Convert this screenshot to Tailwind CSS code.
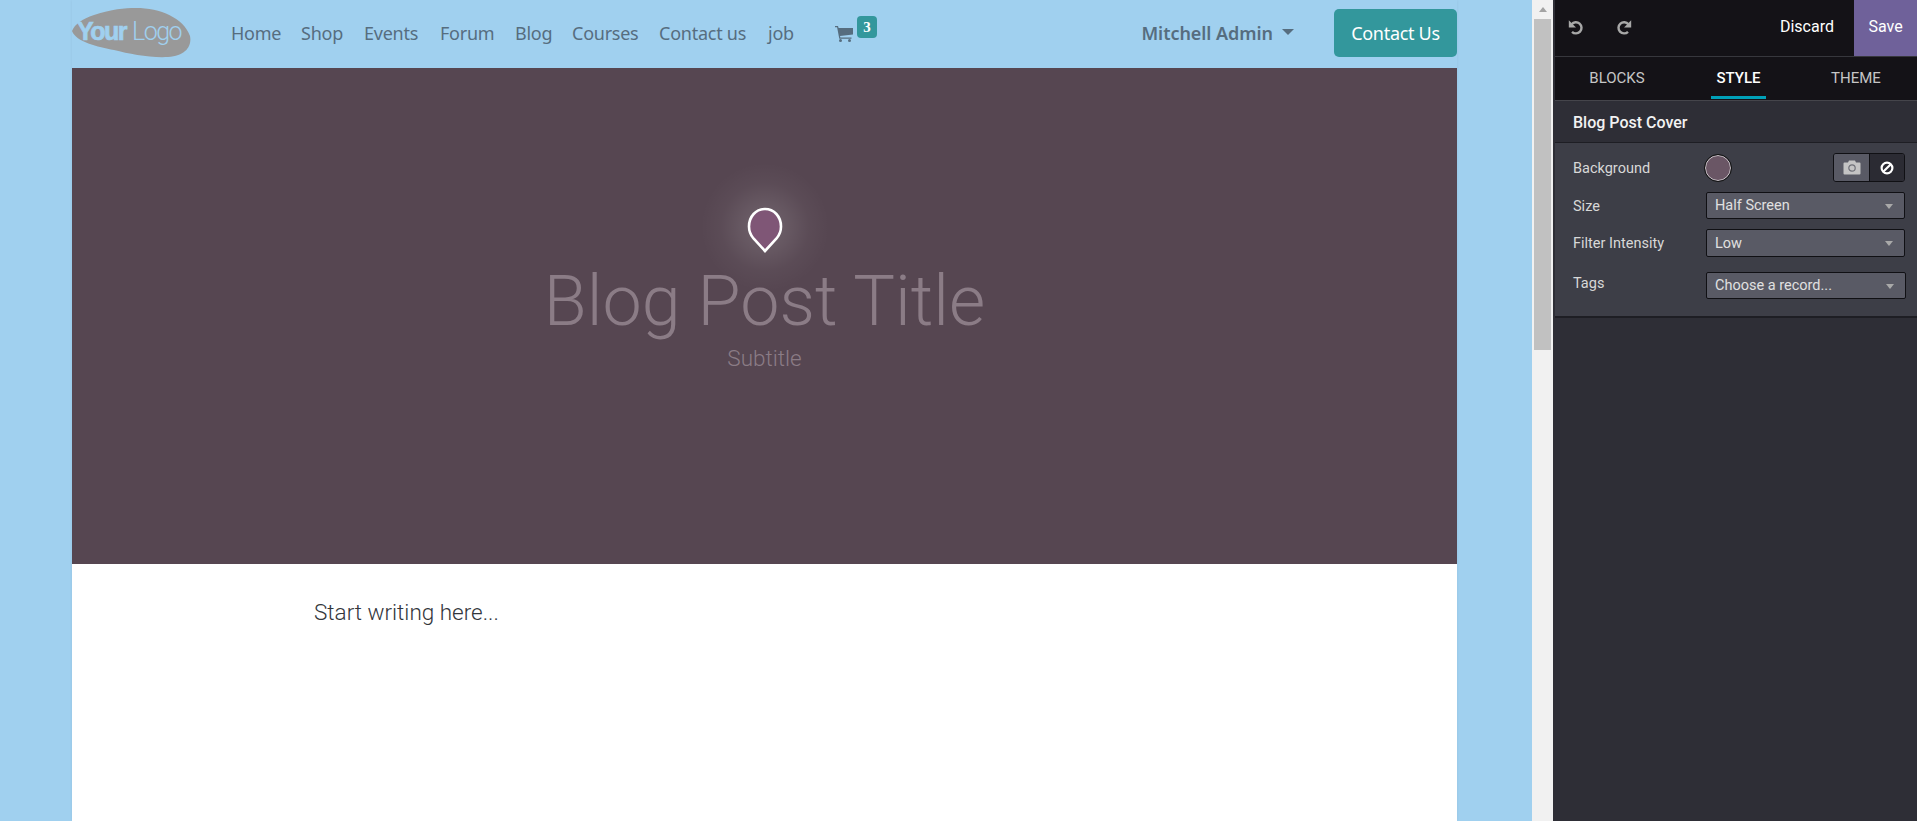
<!DOCTYPE html>
<html><head><meta charset="utf-8"><script src="https://cdn.jsdelivr.net/npm/@tailwindcss/browser@4"></script></head>
<body class="m-0 h-[821px] w-[1917px] overflow-hidden bg-[#a0d0ef]">
<div class="flex h-[821px] w-[1917px]">
  <!-- page -->
  <div class="w-[1532px] h-full pl-[72px] flex flex-col">
    <div class="w-[1385px] h-full flex flex-col shadow-[0_0_3px_rgba(0,0,0,0.06)]">
      <header class="h-[68px] shrink-0 flex items-center bg-[#a0d0ef] font-['Noto_Sans',sans-serif] text-[#566d7f]">
        <svg class="w-[119px] h-[58px] mt-[-10px] shrink-0" viewBox="0 0 119 58">
          <path d="M0 31 C3 24 10 19 22 15 C40 9 52 8 64 8 C88 8 112 18 118 36 C120 46 114 56 96 57 C78 58 58 54 42 50 C26 47 4 42 0 31Z" fill="#999999"/>
          <text x="5" y="40" font-family="Liberation Sans, sans-serif" font-weight="700" font-size="25" letter-spacing="-1.5" fill="#a0d0ef" stroke="#a0d0ef" stroke-width="0.700">Your</text>
          <text x="60" y="40" font-family="Roboto, sans-serif" font-weight="300" font-size="25" letter-spacing="-1.5" fill="#a0d0ef">Logo</text>
        </svg>
        <nav class="ml-[40px] mt-[-2px] flex items-center text-[18px] tracking-[-0.25px] leading-[24px] shrink-0">
          <a class="w-[70px] block">Home</a>
          <a class="w-[63px] block">Shop</a>
          <a class="w-[76px] block">Events</a>
          <a class="w-[75px] block">Forum</a>
          <a class="w-[57px] block">Blog</a>
          <a class="w-[87px] block">Courses</a>
          <a class="w-[109px] block">Contact us</a>
          <a class="w-[67px] block">job</a>
        </nav>
        <div class="self-start mt-[16px] flex items-start shrink-0">
          <svg class="w-[18px] h-[16px] mt-[10px]" viewBox="0 0 18 16" fill="#566d7f"><path d="M0 0h3l.6 2H18v6.500L5 10l.4 1.500H16.500v1.200H4.300L2.100 1.200H0z"/><circle cx="5.500" cy="14.500" r="1.500"/><circle cx="14.500" cy="14.500" r="1.500"/></svg>
          <span class="ml-[4px] w-[20px] h-[22px] rounded-[4px] bg-[#33979c] text-white text-[15px] font-bold font-['Liberation_Serif',serif] flex items-center justify-center">3</span>
        </div>
        <span class="ml-auto mt-[-2px] leading-[24px] text-[18px] font-semibold tracking-[-0.05px]">Mitchell Admin</span>
        <span class="ml-[9px] mt-[-4px] w-0 h-0 border-x-[6px] border-x-transparent border-t-[6px] border-t-[#566d7f]"></span>
        <a class="ml-[40px] mt-[-2px] w-[123px] h-[48px] rounded-[5px] bg-[#33979c] text-white text-[18px] tracking-[-0.3px] flex items-center justify-center">Contact Us</a>
      </header>
      <section class="h-[496px] shrink-0 bg-[#564651] flex flex-col items-center">
        <div class="relative mt-[138px] w-[36px] h-[48px] shrink-0">
          <div class="absolute left-[-47px] top-[-44px] w-[130px] h-[130px] rounded-full bg-[radial-gradient(circle,rgba(255,255,255,0.16)_0%,rgba(255,255,255,0.09)_28%,rgba(255,255,255,0.03)_48%,rgba(255,255,255,0)_70%)]"></div>
          <svg class="absolute left-0 top-0 w-[36px] h-[48px]" viewBox="0 0 36 48">
            <path d="M18 45 L6.500 32.500 C3.500 29 2 25 2 20.500 C2 10.500 9 3 18 3 C27 3 34 10.500 34 20.500 C34 25 32.500 29 29.500 32.500Z" fill="#7f5676" stroke="#fff" stroke-width="2.600"/>
          </svg>
        </div>
        <h1 class="mt-[4px] text-[70px] leading-[86px] font-light text-[#8b7c86] font-['Roboto',sans-serif] whitespace-nowrap">Blog Post Title</h1>
        <p class="mt-[-1px] text-[22.500px] leading-[30px] font-light text-[#8b7c86] font-['Roboto',sans-serif]">Subtitle</p>
      </section>
      <main class="flex-1 bg-white pl-[242px] pt-[32px]">
        <p class="text-[22.500px] leading-[32px] font-light text-[#33363b] font-['Roboto',sans-serif]">Start writing here...</p>
      </main>
    </div>
  </div>
  <!-- scrollbar -->
  <div class="w-[21px] h-full shrink-0 bg-[#f1f1f1] flex flex-col items-center">
    <span class="mt-[7px] w-0 h-0 border-x-[4.500px] border-x-transparent border-b-[5px] border-b-[#a3a3a3]"></span>
    <span class="mt-[7px] w-[17px] h-[331px] bg-[#c1c1c1]"></span>
  </div>
  <!-- panel -->
  <aside class="w-[364px] h-full shrink-0 bg-[#2e2e36] border-l-[2px] border-l-[#2e2e36] font-['Roboto',sans-serif] text-[#d9d9d9] flex flex-col">
    <div class="h-[57px] shrink-0 bg-[#141217] border-b border-b-[#37373d] flex items-center">
      <svg class="ml-[13px] mt-[-2px] w-[16px] h-[16px]" viewBox="0 0 20 20" fill="none" stroke="#a8a8a8" stroke-width="3"><path d="M4.500 6.500A7 7 0 1 1 5 16"/><path d="M1 1.500v9h9" fill="#a8a8a8" stroke="none"/></svg>
      <svg class="ml-[32px] mt-[-2px] w-[16px] h-[16px]" viewBox="0 0 20 20" fill="none" stroke="#a8a8a8" stroke-width="3"><path d="M15.500 6.500A7 7 0 1 0 15 16"/><path d="M19 1.500v9h-9" fill="#a8a8a8" stroke="none"/></svg>
      <span class="ml-auto mr-[20px] mt-[-2px] text-[16px] leading-[20px] text-white">Discard</span>
      <span class="w-[63px] h-[56px] bg-[#6f619a] text-white text-[16px] flex items-center justify-center pb-[2px]">Save</span>
    </div>
    <div class="h-[44px] shrink-0 bg-[#141217] border-b border-b-[#45454b] pl-[2px] grid grid-cols-[120px_123px_112px] text-[15px] leading-[20px] text-[#c6c6c6]">
      <span class="pt-[11px] text-center">BLOCKS</span>
      <span class="pt-[11px] flex flex-col items-center justify-between text-white font-medium">STYLE<span class="w-[55px] h-[3px] mb-[1px] bg-[#00a0b8]"></span></span>
      <span class="pt-[11px] text-center">THEME</span>
    </div>
    <div class="h-[42px] shrink-0 bg-[#2e2e36] border-b border-b-[#1e1e24] flex items-center pl-[18px] pt-[2px] text-[16px] text-[#f2f2f2] font-medium">Blog Post Cover</div>
    <div class="h-[175px] shrink-0 bg-[#3d3e47] border-b-[2px] border-b-[#1e1e24] pl-[18px] pt-[10px] flex flex-col text-[14.500px] text-[#d8d8d8]">
      <div class="h-[29px] flex items-center">
        <span class="w-[132px] mt-[2px]">Background</span>
        <span class="w-[26px] h-[26px] rounded-full bg-[#6a5665] border-[1.500px] border-[#cfc8cd] outline outline-1 outline-[#111]"></span>
        <div class="ml-[102px] w-[72px] h-[29px] rounded-[3px] border border-[#101014] flex overflow-hidden">
          <span class="w-[36px] bg-[#595a65] border-r border-r-[#101014] flex items-center justify-center">
            <svg class="w-[18px] h-[15px]" viewBox="0 0 18 15"><path d="M1.500 2.500h3.500l1-2h6l1 2h3.500a1 1 0 0 1 1 1v10a1 1 0 0 1-1 1h-15a1 1 0 0 1-1-1v-10a1 1 0 0 1 1-1z" fill="#c4c4c4"/><circle cx="9" cy="8" r="3.200" fill="none" stroke="#6f7078" stroke-width="1.200"/></svg>
          </span>
          <span class="flex-1 bg-[#2b2b33] flex items-center justify-center">
            <svg class="w-[14px] h-[14px]" viewBox="0 0 14 14" fill="none" stroke="#fff" stroke-width="2.200"><circle cx="7" cy="7" r="5.400"/><path d="M3.200 10.800L10.800 3.200"/></svg>
          </span>
        </div>
      </div>
      <div class="mt-[10px] h-[27px] flex items-center">
        <span class="w-[133px] mt-[2px]">Size</span>
        <div class="w-[199px] h-[27px] rounded-[2px] border border-[#101014] bg-[#595a65] flex items-center justify-between pl-[8px] pr-[11px] text-[#e0e0e0]">Half Screen<span class="mt-[2px] w-0 h-0 border-x-[4.500px] border-x-transparent border-t-[5px] border-t-[#a9a9a9]"></span></div>
      </div>
      <div class="mt-[10px] h-[28px] flex items-center">
        <span class="w-[133px] mt-[1px]">Filter Intensity</span>
        <div class="w-[199px] h-[28px] rounded-[2px] border border-[#101014] bg-[#595a65] flex items-center justify-between pl-[8px] pr-[11px] pt-[1px] text-[#e0e0e0]">Low<span class="w-0 h-0 border-x-[4.500px] border-x-transparent border-t-[5px] border-t-[#a9a9a9]"></span></div>
      </div>
      <div class="mt-[15px] h-[27px] flex items-center">
        <span class="w-[133px] mt-[-4px]">Tags</span>
        <div class="w-[200px] h-[27px] rounded-[2px] border border-[#101014] bg-[#595a65] flex items-center justify-between pl-[8px] pr-[11px] pt-[1px] text-[#e0e0e0]">Choose a record...<span class="w-0 h-0 border-x-[4.500px] border-x-transparent border-t-[5px] border-t-[#a9a9a9]"></span></div>
      </div>
    </div>
    <div class="flex-1 bg-[#2e2e36]"></div>
  </aside>
</div>
</body></html>
